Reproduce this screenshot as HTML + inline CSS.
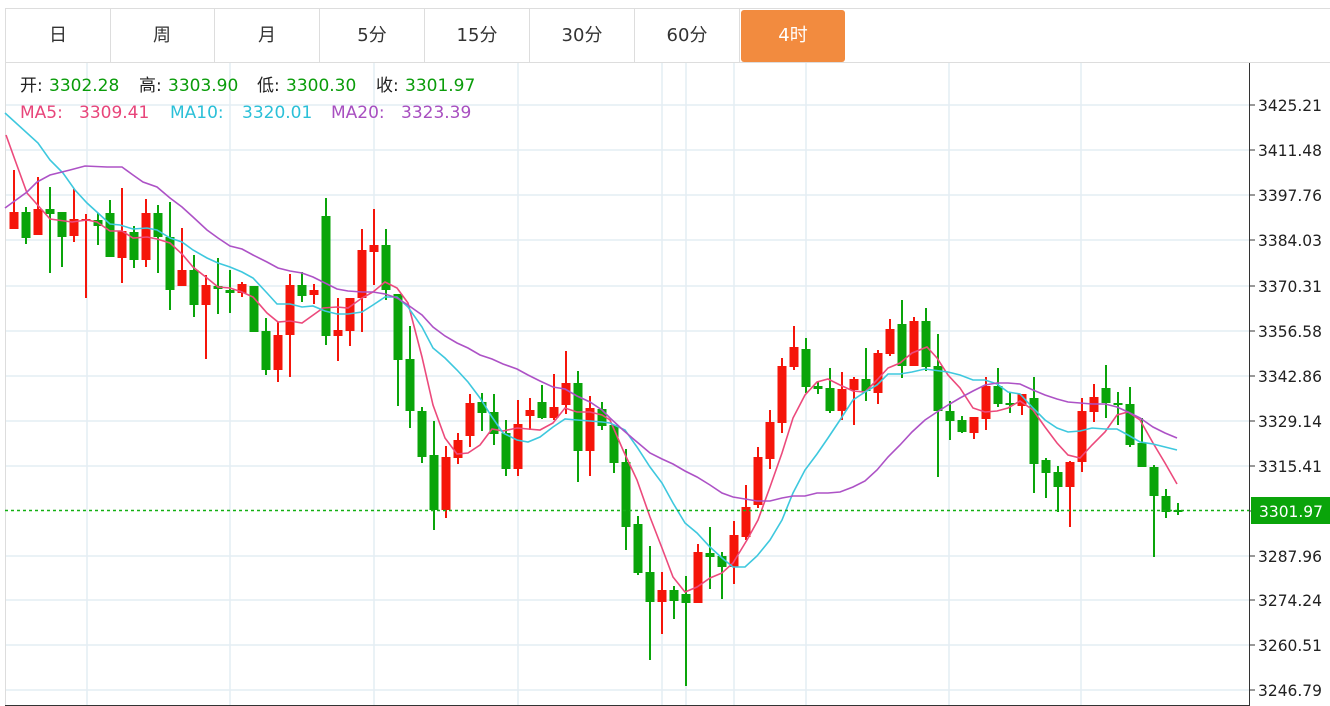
<!DOCTYPE html>
<html><head><meta charset="utf-8">
<style>
html,body{margin:0;padding:0;background:#fff;width:1330px;height:706px;overflow:hidden;font-family:"Liberation Sans","Noto Sans CJK SC",sans-serif;}
.tabs{position:absolute;left:5px;top:8px;height:53px;width:1325px;border-top:1px solid #ddd;border-bottom:1px solid #ddd;}
.tab{position:absolute;top:0;height:53px;width:104px;border-right:1px solid #ddd;text-align:center;line-height:53px;font-size:18px;color:#333;font-family:"DejaVu Sans","Noto Sans CJK SC",sans-serif;}
.tab span{display:inline-block;transform:scaleX(0.95)}
.tab.act{background:#f28b3f;color:#fff;border-radius:3px;border:none;width:104px;top:1px;height:52px;line-height:52px}
.hd{position:absolute;font-size:17px;white-space:pre;font-family:"DejaVu Sans","Noto Sans CJK SC",sans-serif;line-height:20px}
.g{color:#0a9c0a}.k{color:#222}
svg{position:absolute;left:0;top:0}
</style></head><body>
<svg id="c" width="1330" height="706" xmlns="http://www.w3.org/2000/svg"></svg>
<div class="tabs">
<div class="tab" style="left:0;border-left:1px solid #ddd">日</div>
<div class="tab" style="left:105px">周</div>
<div class="tab" style="left:210px">月</div>
<div class="tab" style="left:315px">5分</div>
<div class="tab" style="left:420px">15分</div>
<div class="tab" style="left:525px">30分</div>
<div class="tab" style="left:630px">60分</div>
<div class="tab act" style="left:736px">4时</div>
</div>
<div class="hd k" style="left:20px;top:76px">开:</div><div class="hd g" style="left:49px;top:76px">3302.28</div>
<div class="hd k" style="left:139px;top:76px">高:</div><div class="hd g" style="left:168px;top:76px">3303.90</div>
<div class="hd k" style="left:257px;top:76px">低:</div><div class="hd g" style="left:286px;top:76px">3300.30</div>
<div class="hd k" style="left:376px;top:76px">收:</div><div class="hd g" style="left:405px;top:76px">3301.97</div>
<div class="hd" style="left:20px;top:103px;color:#e8457a">MA5:</div><div class="hd" style="left:79px;top:103px;color:#e8457a">3309.41</div>
<div class="hd" style="left:170px;top:103px;color:#2bc0d8">MA10:</div><div class="hd" style="left:242px;top:103px;color:#2bc0d8">3320.01</div>
<div class="hd" style="left:331px;top:103px;color:#a84fc0">MA20:</div><div class="hd" style="left:401px;top:103px;color:#a84fc0">3323.39</div>
<script>
var s='';
var gy=[105,150,195,240,286,331,376,421,466,511,556,600,645,690];
var lab=['3425.21','3411.48','3397.76','3384.03','3370.31','3356.58','3342.86','3329.14','3315.41','','3287.96','3274.24','3260.51','3246.79'];
gy.forEach(function(y,i){if(i!=9)s+='<line x1="5" x2="1249" y1="'+y+'" y2="'+y+'" stroke="#e4edf3" stroke-width="1.5"/>';});
[87,230,374,518,662,686,734,806,949,1081].forEach(function(x){s+='<line x1="'+x+'" x2="'+x+'" y1="62" y2="705" stroke="#e4edf3" stroke-width="1.5"/>';});
s+='<line x1="5.5" x2="5.5" y1="62" y2="705" stroke="#ddd"/>';
var C=[
[212,229,170,229,1],[212,238,207,244,0],[209,235,177,235,1],[209,214,187,273,0],[212,237,212,267,0],[219,236,189,242,1],[219,221,214,298,1],[220,226,213,245,0],[213,257,200,257,0],[231,258,188,283,1],
[232,260,226,268,0],[213,260,199,267,1],[213,237,205,273,0],[237,290,202,310,0],[270,286,228,286,1],[270,305,255,317,0],[285,305,275,359,1],[286,289,258,314,0],[290,293,270,313,0],[284,293,282,297,1],
[286,332,286,332,0],[331,370,318,375,0],[335,370,322,382,1],[285,335,274,377,1],[285,296,272,302,0],[290,295,284,304,1],[216,336,198,345,0],[330,336,298,361,1],[298,331,298,346,1],[250,298,229,332,1],
[245,252,209,285,1],[245,290,229,300,0],[294,360,294,406,0],[359,411,326,428,0],[411,457,407,463,0],[455,510,421,530,0],[457,510,446,518,1],[440,458,433,464,1],[403,436,394,447,1],[402,413,393,431,0],
[412,434,394,445,0],[433,469,420,476,0],[424,469,400,476,1],[410,416,398,430,1],[402,418,385,419,0],[407,418,374,420,1],[383,405,351,414,1],[383,451,371,482,0],[408,451,396,476,1],[409,426,402,430,0],
[425,463,425,473,0],[462,527,449,550,0],[524,573,516,575,0],[572,602,546,660,0],[590,602,572,634,1],[590,601,586,619,0],[594,603,576,686,0],[552,603,544,603,1],[553,557,527,589,0],[556,567,552,599,0],
[535,567,521,584,1],[507,537,485,540,1],[457,505,447,508,1],[422,459,410,469,1],[366,423,358,433,1],[347,367,326,370,1],[349,387,338,393,0],[386,389,382,394,0],[388,411,368,413,0],[389,411,372,420,1],
[379,390,377,425,1],[379,391,348,401,0],[353,393,350,404,1],[329,354,319,356,1],[324,366,300,378,0],[321,366,317,366,1],[321,367,308,371,0],[366,411,334,477,0],[411,421,401,440,0],[420,432,416,433,0],
[417,433,417,439,1],[386,419,377,430,1],[386,404,368,407,0],[403,405,393,413,0],[394,406,394,415,1],[398,464,377,493,0],[460,473,458,498,0],[472,487,466,512,0],[462,487,461,527,1],[411,462,398,472,1],
[397,412,384,422,1],[388,403,365,418,0],[403,405,392,425,0],[404,445,387,447,0],[443,467,418,467,0],[467,496,465,557,0],[496,512,489,518,0],[510,511,503,515,0]];
C.forEach(function(c,i){var x=14+i*12;var col=c[4]?'#f5150a':'#0aa40a';
s+='<line x1="'+x+'" x2="'+x+'" y1="'+c[2]+'" y2="'+c[3]+'" stroke="'+col+'" stroke-width="2"/>';
var h=Math.max(2,c[1]-c[0]);s+='<rect x="'+(x-4.5)+'" y="'+c[0]+'" width="9" height="'+h+'" fill="'+col+'"/>';});
function pl(p,col){s+='<polyline fill="none" stroke="'+col+'" stroke-width="1.6" points="'+p+'"/>';}
pl('6,135 15,160 27,193 50,219 72,222 87,220 97,222 110,231 122,231 133,238 147,237 157,239 170,243 182,254 193,267 207,278 218,287 230,288 242,292 253,297 267,313 278,322 290,321 302,323 323,308 337,307 348,308 362,298 373,292 385,282 397,288 408,303 422,357 433,405 445,438 457,454 468,453 480,445 492,429 503,431 517,428 528,429 540,430 553,423 565,408 577,412 590,412 602,415 610,420 623,450 637,480 650,517 662,548 673,577 685,592 697,587 710,578 722,573 733,563 747,540 758,520 770,487 782,453 793,418 805,395 817,382 828,379 840,385 853,391 865,392 877,380 888,368 900,363 912,353 927,347 937,358 948,375 960,388 973,408 985,412 997,411 1008,408 1020,401 1033,410 1045,427 1057,443 1068,455 1080,458 1092,445 1105,432 1117,415 1128,412 1140,420 1153,443 1165,463 1177,484','#ec4a7c');
pl('5,113 38,143 50,160 63,173 75,190 87,203 98,213 110,224 120,225 133,229 147,228 157,230 170,238 182,242 193,250 207,258 218,263 230,267 242,272 253,278 267,293 277,304 290,304 302,307 313,306 325,311 337,314 348,314 362,312 373,305 385,297 397,297 408,307 422,327 433,348 445,358 457,370 468,382 480,398 492,417 503,433 517,440 528,442 540,437 553,427 565,419 577,420 590,421 602,422 610,423 625,430 637,447 650,467 662,483 673,503 685,523 697,533 710,547 722,558 733,567 745,567 757,556 770,540 782,520 793,493 805,470 817,454 828,438 840,420 853,400 865,392 877,385 888,374 900,374 912,372 925,369 948,372 960,375 973,380 985,380 997,384 1008,392 1020,394 1033,408 1045,420 1057,428 1068,432 1080,431 1092,428 1105,429 1117,429 1128,435 1140,442 1153,444 1165,447 1177,450','#3ec8de');
pl('5,208 27,192 37,182 50,175 70,170 85,166 107,167 122,167 133,175 143,182 157,187 170,198 182,207 193,217 207,230 218,238 230,246 242,249 253,255 267,262 278,268 290,271 302,273 313,277 325,283 337,289 348,291 362,292 373,292 385,294 397,298 408,305 422,315 433,327 445,336 457,343 468,348 480,355 492,359 503,364 517,369 528,375 540,381 553,387 565,389 577,396 590,402 602,410 610,418 623,430 637,442 650,453 662,459 673,464 685,471 697,477 710,485 722,493 733,497 745,499 757,501 770,501 782,498 793,496 805,496 817,493 828,493 840,492 853,487 865,481 877,470 888,457 900,445 912,432 925,420 937,412 948,405 960,398 973,391 985,385 997,383 1008,383 1020,384 1033,390 1045,395 1057,399 1068,402 1080,403 1092,404 1105,404 1117,407 1128,412 1140,418 1153,427 1165,433 1177,438','#ad52c6');
s+='<line x1="5" x2="1249" y1="510.5" y2="510.5" stroke="#13b013" stroke-width="1.5" stroke-dasharray="3,3"/>';
s+='<line x1="1249.5" x2="1249.5" y1="62" y2="706" stroke="#333"/>';
s+='<line x1="5" x2="1249" y1="705.5" y2="705.5" stroke="#333"/>';
gy.forEach(function(y,i){s+='<line x1="1249" x2="1255" y1="'+y+'" y2="'+y+'" stroke="#333"/>';if(lab[i])s+='<text x="1258" y="'+(y+6)+'" font-family="DejaVu Sans,sans-serif" font-size="16" textLength="64" lengthAdjust="spacingAndGlyphs" fill="#222">'+lab[i]+'</text>';});
s+='<rect x="1251" y="497" width="79" height="27" fill="#0aa40a"/><text x="1259" y="517" font-family="DejaVu Sans,sans-serif" font-size="16" textLength="64" lengthAdjust="spacingAndGlyphs" fill="#fff">3301.97</text>';
document.getElementById('c').innerHTML=s;
</script>
</body></html>
